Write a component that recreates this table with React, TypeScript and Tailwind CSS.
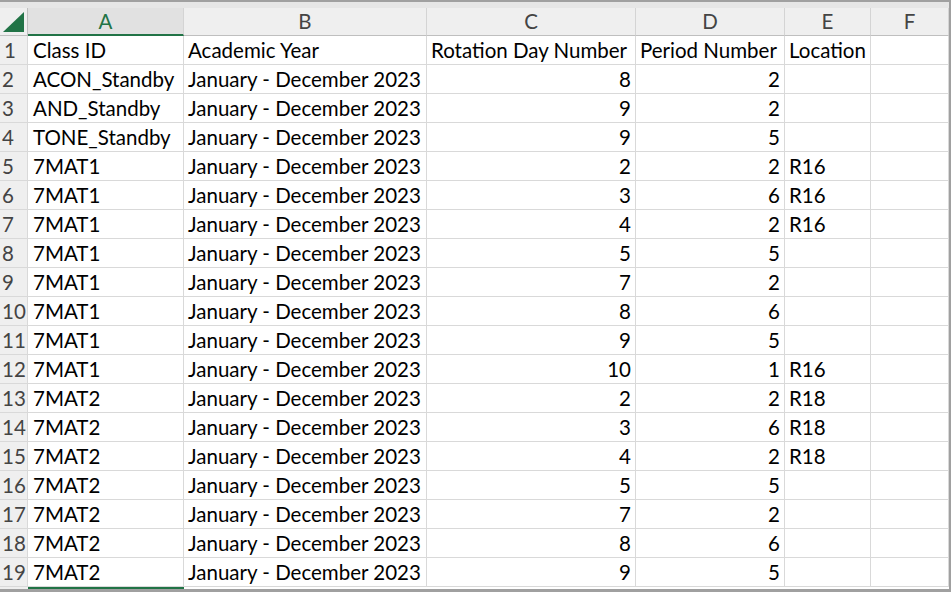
import React from "react";

type Row = [string, string, number, number, string];

const ROWS: Row[] = [
  ["ACON_Standby", "January - December 2023", 8, 2, ""],
  ["AND_Standby", "January - December 2023", 9, 2, ""],
  ["TONE_Standby", "January - December 2023", 9, 5, ""],
  ["7MAT1", "January - December 2023", 2, 2, "R16"],
  ["7MAT1", "January - December 2023", 3, 6, "R16"],
  ["7MAT1", "January - December 2023", 4, 2, "R16"],
  ["7MAT1", "January - December 2023", 5, 5, ""],
  ["7MAT1", "January - December 2023", 7, 2, ""],
  ["7MAT1", "January - December 2023", 8, 6, ""],
  ["7MAT1", "January - December 2023", 9, 5, ""],
  ["7MAT1", "January - December 2023", 10, 1, "R16"],
  ["7MAT2", "January - December 2023", 2, 2, "R18"],
  ["7MAT2", "January - December 2023", 3, 6, "R18"],
  ["7MAT2", "January - December 2023", 4, 2, "R18"],
  ["7MAT2", "January - December 2023", 5, 5, ""],
  ["7MAT2", "January - December 2023", 7, 2, ""],
  ["7MAT2", "January - December 2023", 8, 6, ""],
  ["7MAT2", "January - December 2023", 9, 5, ""],
];

const GRID = "grid grid-cols-[28px_156px_243px_209px_149px_86px_1fr]";
const cell = "border-r border-b border-[#d9d9d9] h-[29px] flex items-center overflow-hidden whitespace-nowrap";

function ColHead({ label, active }: { label: string; active?: boolean }) {
  return (
    <div
      className={`flex h-[28px] items-center justify-center border-r border-[#d4d4d4] ${
        active ? "bg-[#e1e1e1] border-b-2 border-b-[#217346] text-[#217346]" : "bg-[#efefef] border-b border-b-[#bfbfbf] text-[#444]"
      }`}
    >
      {label}
    </div>
  );
}

export default function App() {
  return (
    <div
      className="h-[592px] w-[951px] overflow-hidden bg-white text-[20.5px] text-black"
      style={{ fontFamily: "Lato, 'Open Sans', sans-serif" }}
    >
      <div className="flex h-full flex-col border-t-2 border-b-[3px] border-r-2 border-[#a0a0a0]">
        <div className="h-[6px] shrink-0 bg-[#e6e6e6]" />
        <div className={GRID}>
          <div className="flex h-[28px] items-end justify-end border-r border-b border-[#bfbfbf] bg-[#efefef] pr-[3px] pb-[3px]">
            <svg width="21" height="20" viewBox="0 0 21 20">
              <polygon points="21,0 21,20 0,20" fill="#217346" />
            </svg>
          </div>
          <ColHead label="A" active />
          <ColHead label="B" />
          <ColHead label="C" />
          <ColHead label="D" />
          <ColHead label="E" />
          <ColHead label="F" />

          <div className={`${cell} bg-[#efefef] pl-1 text-[#444] border-[#d0d0d0]`}>1</div>
          <div className={`${cell} pl-[5px]`}>Class ID</div>
          <div className={`${cell} pl-[4px]`}>Academic Year</div>
          <div className={`${cell} pl-[4px]`}>Rotation Day Number</div>
          <div className={`${cell} pl-[4px]`}>Period Number</div>
          <div className={`${cell} pl-[4px]`}>Location</div>
          <div className={cell} />

          {ROWS.map((r, i) => (
            <React.Fragment key={i}>
              <div className={`${cell} bg-[#efefef] pl-[2px] text-[#444] border-[#d0d0d0]`}>{i + 2}</div>
              <div className={`${cell} pl-[5px]`}>{r[0]}</div>
              <div className={`${cell} pl-[4px]`}>{r[1]}</div>
              <div className={`${cell} justify-end pr-[4px]`}>{r[2]}</div>
              <div className={`${cell} justify-end pr-[4px]`}>{r[3]}</div>
              <div className={`${cell} pl-[4px]`}>{r[4]}</div>
              <div className={cell} />
            </React.Fragment>
          ))}
          <div className="bg-[#efefef]" />
          <div className="border-t-2 border-[#217346]" />
        </div>
      </div>
    </div>
  );
}
